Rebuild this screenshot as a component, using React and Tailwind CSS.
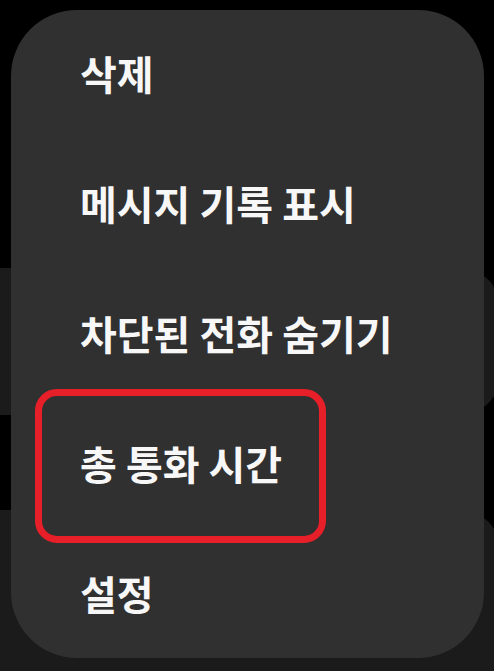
export default function App() {
  const items = ["삭제", "메시지 기록 표시", "차단된 전화 숨기기", "총 통화 시간", "설정"];
  return (
    <div className="relative w-[494px] h-[671px] bg-black overflow-hidden" style={{ fontFamily: '"Noto Sans CJK KR", "Noto Sans", sans-serif' }}>
      <div className="flex flex-col pt-[268px]">
        <div className="h-[147px] w-[500px] bg-[#1b1b1b] rounded-r-[40px]" />
        <div className="h-[95px]" />
        <div className="h-[200px] w-[500px] bg-[#1b1b1b] rounded-tr-[40px]" />
      </div>
      <div className="absolute left-[11px] top-[10px] w-[473px] h-[648px] rounded-[66px] bg-[#303030] overflow-hidden pt-[13px] flex flex-col">
        {items.map((t) => (
          <div key={t} className="h-[130px] shrink-0 flex items-center pl-[69px] pb-[30px] text-[40px] font-bold leading-none text-[#f7f7f7]">
            {t}
          </div>
        ))}
      </div>
      <div className="absolute left-[35px] top-[389px] w-[291px] h-[154px] border-[7px] border-[#e61f29] rounded-[22px]" />
    </div>
  );
}
